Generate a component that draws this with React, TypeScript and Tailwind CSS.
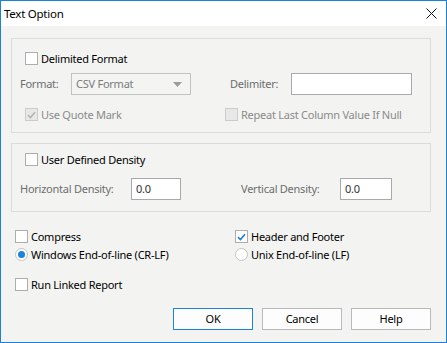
import type { ReactNode } from 'react'

const font = { fontFamily: '"Segoe UI", "Noto Sans", "Open Sans", sans-serif' }

function Checkbox({ checked = false, disabled = false }: { checked?: boolean; disabled?: boolean }) {
  return (
    <span
      className={`flex h-[13px] w-[13px] shrink-0 items-center justify-center border ${
        disabled ? 'border-[#cccccc] bg-[#e8e8e8]' : 'border-[#adadad] bg-white'
      }`}
    >
      {checked && (
        <svg width="9" height="8" viewBox="0 0 9 8">
          <path
            d="M1 4.2 L3.4 6.5 L8 1.2"
            fill="none"
            stroke={disabled ? '#b4b4b4' : '#1a7fd4'}
            strokeWidth="1.6"
          />
        </svg>
      )}
    </span>
  )
}

function Radio({ checked = false }: { checked?: boolean }) {
  return (
    <span className="flex h-[13px] w-[13px] shrink-0 items-center justify-center rounded-full border border-[#c4c4c4] bg-white">
      {checked && <span className="h-[7px] w-[7px] rounded-full bg-[#1a84dc]" />}
    </span>
  )
}

function Check({
  label,
  checked,
  disabled,
  radio,
}: {
  label: string
  checked?: boolean
  disabled?: boolean
  radio?: boolean
}) {
  return (
    <div className="flex h-[13px] items-center gap-[3px]">
      {radio ? <Radio checked={checked} /> : <Checkbox checked={checked} disabled={disabled} />}
      <span className={`leading-none ${disabled ? 'text-[#8a8a8a]' : 'text-black'}`}>{label}</span>
    </div>
  )
}

function Field({ value, w }: { value?: string; w: string }) {
  return (
    <div className={`flex h-[22px] ${w} items-center border border-[#a9a9a9] bg-white px-[4px] text-[#333]`}>
      {value}
    </div>
  )
}

function Group({ children, className }: { children: ReactNode; className: string }) {
  return <div className={`ml-[10px] w-[420px] border border-[#dcdcdc] ${className}`}>{children}</div>
}

function Button({ label, primary }: { label: string; primary?: boolean }) {
  return (
    <div
      className={`flex h-[22px] w-[80px] items-center justify-center border bg-[#fdfdfd] text-black ${
        primary ? 'border-[#1a84dc]' : 'border-[#b9b9b9]'
      }`}
    >
      {label}
    </div>
  )
}

export default function App() {
  return (
    <div
      style={font}
      className="flex h-[343px] w-[447px] flex-col border border-[#1883d7] bg-[#f3f4f2] text-[11px] tracking-[-0.25px]"
    >
      {/* Title bar */}
      <div className="flex h-[25px] shrink-0 items-center justify-between bg-white pl-[3px] pr-[9px]">
        <span className="text-[11.5px] text-black">Text Option</span>
        <svg width="11" height="11" viewBox="0 0 11 11">
          <path d="M0.5 0.5 L10.5 10.5 M10.5 0.5 L0.5 10.5" stroke="#111" strokeWidth="1" />
        </svg>
      </div>

      {/* Delimited format */}
      <Group className="mt-[12px] pt-[13px] pb-[11px]">
        <div className="pl-[13px]">
          <Check label="Delimited Format" />
        </div>
        <div className="mt-[8px] flex items-center pl-[8px] text-[#6d6d6d]">
          <span className="w-[51px]">Format:</span>
          <div className="flex h-[22px] w-[120px] items-center justify-between border border-[#c2c2c2] bg-[#f4f4f2] pl-[4px] pr-[8px] text-[#7a7a7a]">
            <span>CSV Format</span>
            <svg width="9" height="5" viewBox="0 0 9 5">
              <path d="M0 0 H9 L4.5 5 Z" fill="#9c9c9c" />
            </svg>
          </div>
          <span className="ml-[39px] w-[61px]">Delimiter:</span>
          <Field w="w-[121px]" />
        </div>
        <div className="mt-[13px] flex pl-[13px]">
          <div className="w-[200px]">
            <Check label="Use Quote Mark" checked disabled />
          </div>
          <Check label="Repeat Last Column Value If Null" disabled />
        </div>
      </Group>

      {/* Density */}
      <Group className="mt-[10px] pt-[9px] pb-[11px]">
        <div className="pl-[13px]">
          <Check label="User Defined Density" />
        </div>
        <div className="mt-[12px] flex items-center pl-[8px] text-[#6d6d6d]">
          <span className="w-[111px]">Horizontal Density:</span>
          <Field value="0.0" w="w-[50px]" />
          <span className="ml-[60px] w-[99px]">Vertical Density:</span>
          <Field value="0.0" w="w-[52px]" />
        </div>
      </Group>

      {/* Options */}
      <div className="mt-[18px] flex pl-[14px]">
        <div className="w-[220px]">
          <Check label="Compress" />
        </div>
        <Check label="Header and Footer" checked />
      </div>
      <div className="mt-[5px] flex pl-[14px]">
        <div className="w-[220px]">
          <Check label="Windows End-of-line (CR-LF)" radio checked />
        </div>
        <Check label="Unix End-of-line (LF)" radio />
      </div>
      <div className="mt-[17px] pl-[14px]">
        <Check label="Run Linked Report" />
      </div>

      {/* Buttons */}
      <div className="mt-[17px] flex justify-end gap-[9px] pr-[15px]">
        <Button label="OK" primary />
        <Button label="Cancel" />
        <Button label="Help" />
      </div>
    </div>
  )
}
